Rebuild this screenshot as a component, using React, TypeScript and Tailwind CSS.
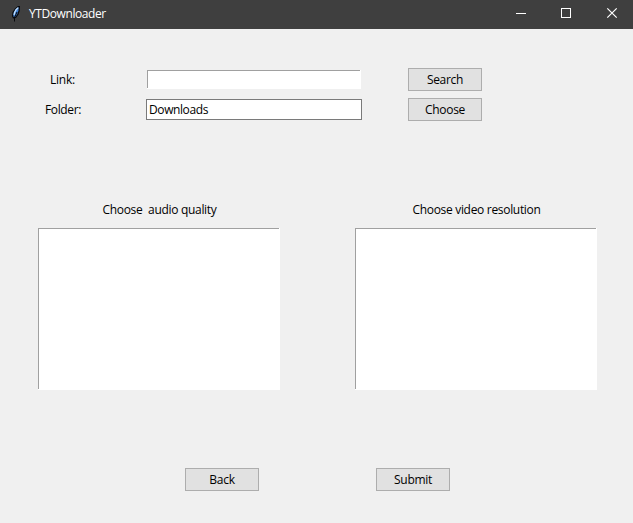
import type { ReactNode } from "react";

function FeatherIcon() {
  return (
    <svg className="ml-[11px] h-4 w-3" viewBox="0 0 12 16" aria-hidden="true">
      <path d="M2 12.5 1 10 1.5 6 4 2.5 7 0H9L8.7 5 7.5 8.5 5 12Z" fill="#08090d" />
      <path d="M2.2 10.5 2.7 6.5 4.7 3.2 7.6 1 7.5 4.5 6.3 8 4.2 11Z" fill="#3f7fd0" />
      <path d="M3 9 3.8 6 5.3 3.5 7.2 1.6" stroke="#c4e2ff" strokeWidth="1.3" fill="none" />
      <path d="M3.5 15.5V11.5L6 6" stroke="#08090d" strokeWidth="1" fill="none" />
    </svg>
  );
}

function TitleBar() {
  return (
    <header className="flex h-[29px] items-center bg-[#3f3f3f] pb-[2px] text-white">
      <FeatherIcon />
      <h1 className="ml-[6px] grow tracking-[-0.42px]">YTDownloader</h1>
      <svg className="h-[27px] w-[135px] shrink-0" viewBox="0 0 135 27" fill="none" stroke="#fff" aria-hidden="true">
        <path d="M18 13.5h10M63.5 8.5h9v9h-9z" shapeRendering="crispEdges" />
        <path d="m109.3 8.3 9.4 9.4m0-9.4-9.4 9.4" strokeWidth="1.2" />
      </svg>
    </header>
  );
}

function Button({ children }: { children: ReactNode }) {
  return (
    <button className="flex h-[23px] w-[74px] items-center justify-center border border-[#adadad] bg-[#e1e1e1] tracking-[-0.3px]">
      {children}
    </button>
  );
}

function ListPanel({ title }: { title: string }) {
  return (
    <section className="w-[242px]">
      <h2 className="flex h-[18px] items-center justify-center whitespace-pre pl-px tracking-[-0.31px]">{title}</h2>
      <div className="mt-[9px] h-[162px] bg-white pr-px pb-px">
        <div className="h-full border-t border-l border-[#a0a0a0]" />
      </div>
    </section>
  );
}

export default function App() {
  return (
    <div className="flex h-[523px] w-[633px] flex-col overflow-hidden bg-[#f0f0f0] font-['Open_Sans','Noto_Sans',sans-serif] text-[12px] leading-4 text-black">
      <TitleBar />
      <main className="flex flex-col">
        <div className="mt-[39px] flex h-[23px] items-center pl-[38px]">
          <label className="w-[49px] text-center tracking-[-0.25px]">Link:</label>
          <div className="ml-[60px] h-[19px] w-[214px] bg-white pr-px pb-px">
            <div className="h-full border-t border-l border-[#a0a0a0]" />
          </div>
          <div className="ml-[47px]"><Button>Search</Button></div>
        </div>
        <div className="mt-[7px] flex h-[23px] items-center pl-[38px]">
          <label className="w-[49px] pl-px text-center tracking-[-0.35px]">Folder:</label>
          <div className="ml-[59px] flex h-[21px] w-[216px] items-center border border-[#7a7a7a] bg-white pl-[2px] tracking-[-0.4px]">
            Downloads
          </div>
          <div className="ml-[46px]"><Button>Choose</Button></div>
        </div>
        <div className="mt-[80px] flex gap-[75px] pl-[38px]">
          <ListPanel title="Choose  audio quality" />
          <ListPanel title="Choose video resolution" />
        </div>
        <div className="mt-[78px] flex gap-[117px] pl-[185px]">
          <Button>Back</Button>
          <Button>Submit</Button>
        </div>
      </main>
    </div>
  );
}
